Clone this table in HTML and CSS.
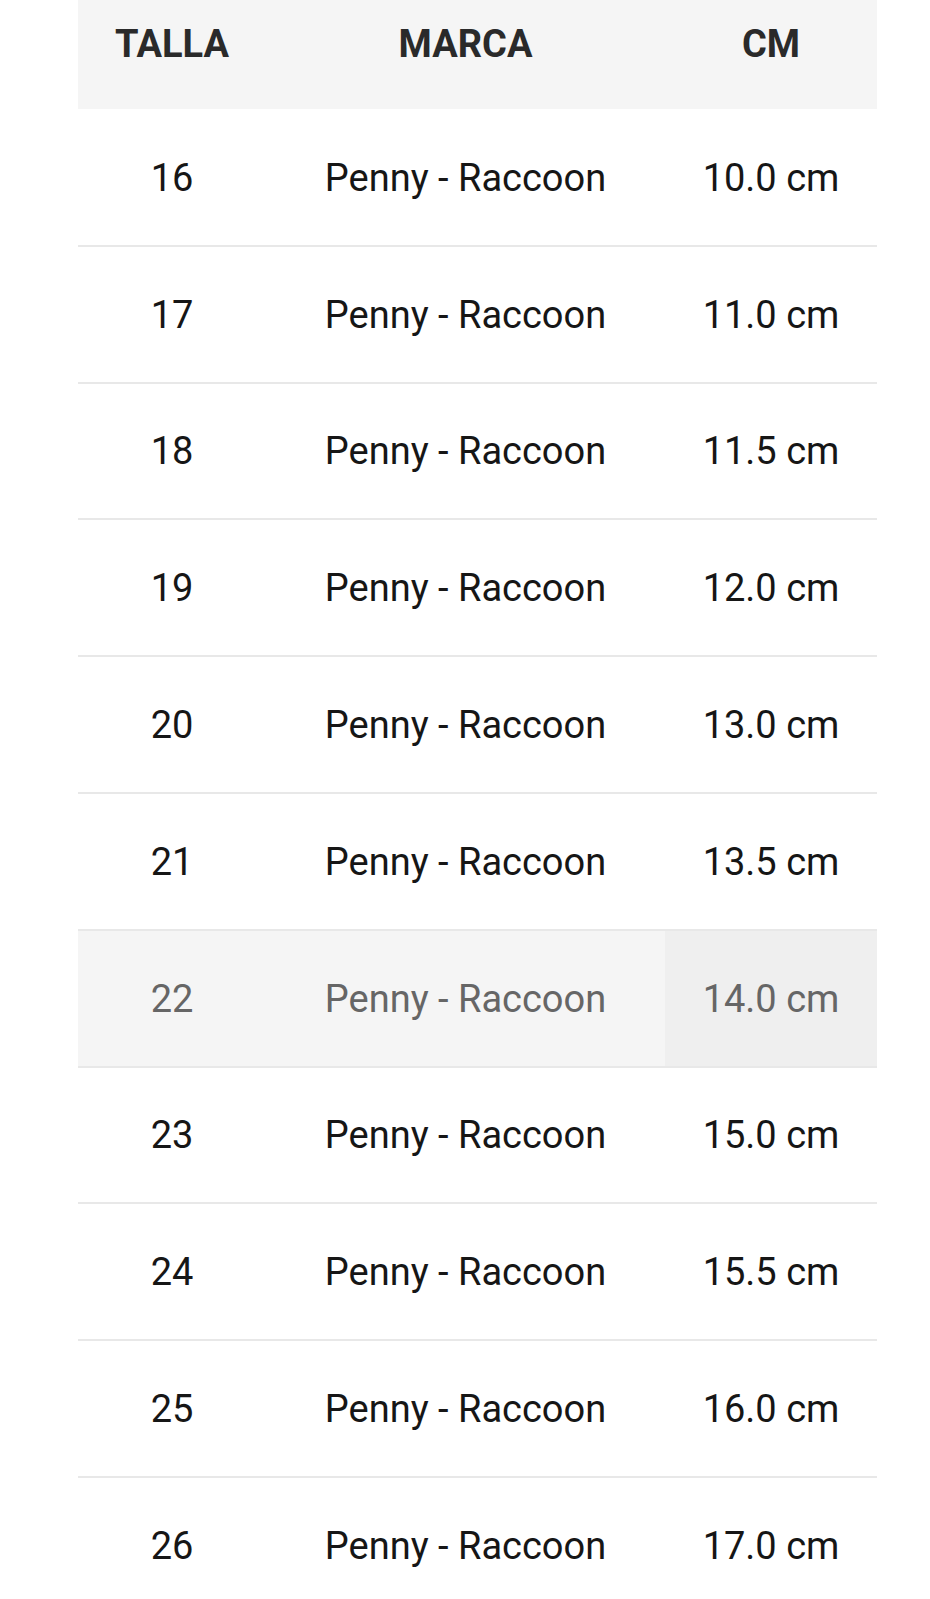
FILE: index.html
```html
<!DOCTYPE html>
<html lang="es">
<head>
<meta charset="utf-8">
<title>Tabla de tallas</title>
<link rel="stylesheet" href="styles.css">
</head>
<body>
<div class="size-table">
  <div class="row head">
    <div class="cell">TALLA</div>
    <div class="cell">MARCA</div>
    <div class="cell">CM</div>
  </div>
  <div class="row"><div class="cell">16</div><div class="cell">Penny - Raccoon</div><div class="cell">10.0 cm</div></div>
  <div class="row"><div class="cell">17</div><div class="cell">Penny - Raccoon</div><div class="cell">11.0 cm</div></div>
  <div class="row"><div class="cell">18</div><div class="cell">Penny - Raccoon</div><div class="cell">11.5 cm</div></div>
  <div class="row"><div class="cell">19</div><div class="cell">Penny - Raccoon</div><div class="cell">12.0 cm</div></div>
  <div class="row"><div class="cell">20</div><div class="cell">Penny - Raccoon</div><div class="cell">13.0 cm</div></div>
  <div class="row"><div class="cell">21</div><div class="cell">Penny - Raccoon</div><div class="cell">13.5 cm</div></div>
  <div class="row active"><div class="cell">22</div><div class="cell">Penny - Raccoon</div><div class="cell hover">14.0 cm</div></div>
  <div class="row"><div class="cell">23</div><div class="cell">Penny - Raccoon</div><div class="cell">15.0 cm</div></div>
  <div class="row"><div class="cell">24</div><div class="cell">Penny - Raccoon</div><div class="cell">15.5 cm</div></div>
  <div class="row"><div class="cell">25</div><div class="cell">Penny - Raccoon</div><div class="cell">16.0 cm</div></div>
  <div class="row"><div class="cell">26</div><div class="cell">Penny - Raccoon</div><div class="cell">17.0 cm</div></div>
</div>
</body>
</html>
```

FILE: styles.css
```css
html, body {
  margin: 0;
  padding: 0;
  background: #ffffff;
}

body {
  font-family: Roboto, "Liberation Sans", Arial, sans-serif;
  color: #161616;
  overflow: hidden;
}

.size-table {
  width: 799px;
  margin-left: 78px;
}

.row {
  display: grid;
  grid-template-columns: 188px 399px 212px;
  height: 136.8px;
  box-sizing: border-box;
  border-bottom: 2px solid #e8e8e8;
}

.cell {
  display: flex;
  align-items: center;
  justify-content: center;
  font-size: 38px;
  line-height: 46px;
  padding-top: 1px;
  white-space: nowrap;
}

.row.head {
  height: 109px;
  margin-bottom: 1px;
  border-bottom: none;
  background: #f5f5f5;
}

.row.head .cell {
  align-items: flex-start;
  padding-top: 21px;
  font-weight: 700;
  color: #2a2a2a;
}

.row.active {
  background: #f5f5f5;
}

.row.active .cell {
  color: #666666;
}

.row.active .cell.hover {
  background: #efefef;
}
```
